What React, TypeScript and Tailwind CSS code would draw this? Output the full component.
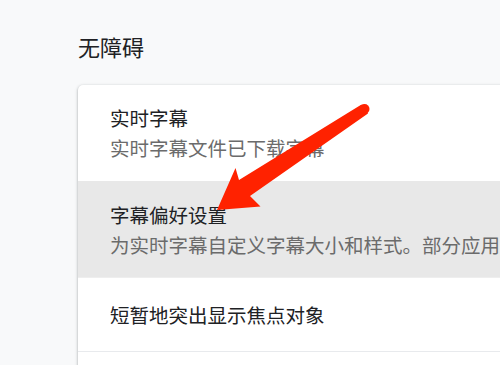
import React from "react";

export default function App() {
  const font = { fontFamily: '"Noto Sans CJK SC", "Noto Sans", sans-serif' };
  return (
    <div
      className="relative w-[500px] h-[365px] overflow-hidden bg-[#f8f9fa]"
      style={font}
    >
      <div className="pt-[31px] pl-[78px]">
        <h2 className="text-[22px] leading-[30px] text-[#202124] font-normal">无障碍</h2>
        <div className="mt-[24px] w-[520px] bg-white rounded-[5px] overflow-hidden shadow-[0_1px_2px_0_rgba(60,64,67,0.3),0_1px_3px_1px_rgba(60,64,67,0.15)]">
          <div className="h-[96px] pl-[32px] flex flex-col justify-center">
            <div className="text-[19.5px] leading-[30px] text-[#202124]">实时字幕</div>
            <div className="text-[19.5px] leading-[30px] text-[#6b6b6b] whitespace-nowrap">实时字幕文件已下载字幕</div>
          </div>
          <div className="h-[96px] pl-[32px] flex flex-col justify-center bg-[#e8e8e8] border-t border-[#e8e8e8]">
            <div className="text-[19.5px] leading-[30px] text-[#202124]">字幕偏好设置</div>
            <div className="text-[19.5px] leading-[30px] text-[#6b6b6b] whitespace-nowrap">为实时字幕自定义字幕大小和样式。部分应用</div>
          </div>
          <div className="h-[74px] pl-[32px] flex items-center border-t border-[#eeeeee]">
            <div className="text-[19.5px] leading-[30px] text-[#202124]">短暂地突出显示焦点对象</div>
          </div>
          <div className="h-[40px] border-t border-[#e8eaed]" />
        </div>
      </div>
      <svg
        className="absolute left-0 top-0 pointer-events-none"
        width="500"
        height="365"
        viewBox="0 0 500 365"
      >
        <polygon
          fill="#ff2200"
          points="217,210 235.5,168 239,180 361.5,104.5 368,113.5 250,196 260.5,206.5"
        />
        <circle cx="364.5" cy="109" r="5" fill="#ff2200" />
      </svg>
    </div>
  );
}
